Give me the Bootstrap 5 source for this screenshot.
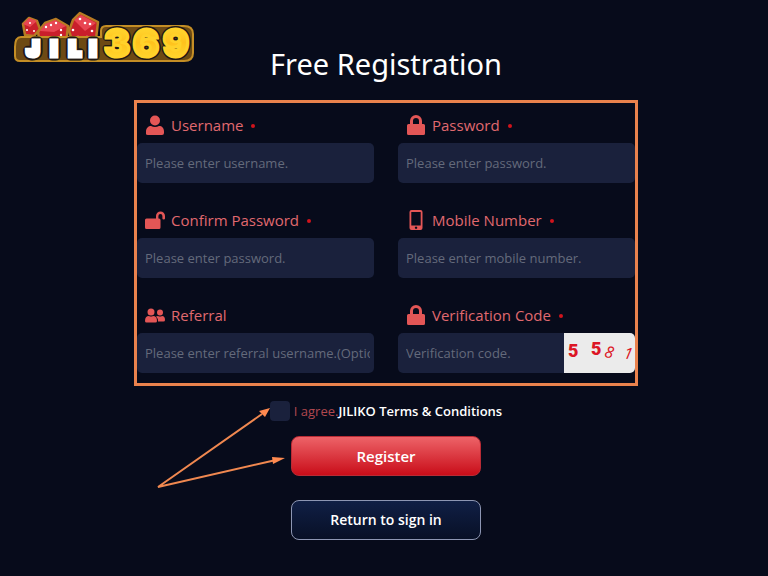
<!DOCTYPE html>
<html lang="en">
<head>
<meta charset="utf-8">
<meta name="viewport" content="width=device-width, initial-scale=1">
<title>Free Registration</title>
<link href="https://cdn.jsdelivr.net/npm/bootstrap@5.3.0/dist/css/bootstrap.min.css" rel="stylesheet">
<style>
body{background:#070b1b;color:#fff;font-family:"Open Sans","Noto Sans",sans-serif}
.brand{left:12px;top:8px}
.reg-main{max-width:508px;padding-top:44px}
.page-title{font-size:29px;line-height:40px;font-weight:400;font-family:"Noto Sans",sans-serif}
.frame{border:3px solid #ea824d}
.fields{column-gap:24px;row-gap:15px;display:grid;grid-template-columns:1fr 1fr;padding-bottom:10px}
.field-label{height:40px;color:#e0696f;font-size:15px;line-height:20px;padding:8px 8px 0}
.field-label svg{width:20px;height:20px;margin-right:6px;fill:#e35656;flex:none}
.req{width:4px;height:4px;background:#d0141c;margin:13px 0 0 8px}
.entry,.entry:focus{height:40px;background:#1a213c;border:0;border-radius:5px;color:#fff;font-size:13px;padding:0 4px 0 8px}
.entry::placeholder{color:#646a7b;opacity:1}
.code-img{width:71px;height:40px;background:#ebebeb;border-radius:0 5px 5px 0}
.agree{font-size:13px;line-height:20px;padding:15px 0}
.agree .form-check-input{width:20px;height:20px;background-color:#1a213c;border:0;border-radius:4px;margin:0 4px 0 0}
.agree label{color:#b0484f}
.agree a{font-weight:600}
.actions{width:190px}
.actions .btn{height:40px;font-size:15px;line-height:20px;border-radius:8px;font-weight:600}
.btn-reg{background:linear-gradient(#ed6368,#c90d19);border:1px solid #b82b35}
.actions .btn-back{background:linear-gradient(#101f45,#081026);border:1px solid #8d96b3;font-size:14px}
.arrows{left:0;top:0}
</style>
<script src="https://cdn.jsdelivr.net/npm/bootstrap@5.3.0/dist/js/bootstrap.bundle.min.js"></script>
</head>
<body>
<svg width="0" height="0" class="position-absolute" aria-hidden="true">
<symbol id="user" viewBox="0 0 20 20"><circle cx="10" cy="5.5" r="5"/><path d="M1 19v-2.500C1 13 3.500 11 6 11q4 2 8 0c3 0 5 2 5 5.500V18q0 2-2 2H3q-2 0-2-1Z"/></symbol>
<symbol id="lock" viewBox="0 0 20 20"><path fill-rule="evenodd" d="M4 9V6a6 6 0 0 1 12 0v3h1.500q1.500 0 1.500 1.500v8q0 1.500-1.500 1.500h-15Q1 20 1 18.500v-8Q1 9 2.500 9Zm3 0h6V6a3 3 0 0 0-6 0Z"/></symbol>
<symbol id="unlock" viewBox="0 0 20 20"><path d="M11 8.500V6a4.500 4.500 0 0 1 9 0v2.500q0 1-1.300 1t-1.300-1V6a2 2 0 0 0-4 0v2.500H14q1.500 0 1.500 1.500v7.500q0 1.500-1.500 1.500H1.500Q0 19 0 17.500V10q0-1.500 1.500-1.500Z"/></symbol>
<symbol id="phone" viewBox="0 0 20 20"><path fill-rule="evenodd" d="M5.500 0h9q2 0 2 2v16q0 2-2 2h-9q-2 0-2-2V2q0-2 2-2Zm-.2 2v13.500h9.400V2Zm4.700 14.500a1.200 1.200 0 1 0 .1 0Z"/></symbol>
<symbol id="users" viewBox="0 0 20 20"><circle cx="6" cy="7" r="3.500"/><circle cx="15" cy="7.500" r="3"/><path d="M0 16q0-5 4-5 2 1 4 0 4 0 4 5 0 1.500-1.500 1.500h-9Q0 17.500 0 16Zm13 .5q0-3.500-2-5 1-.5 2-.5 2 1 4 0 3 0 3 4 0 1.500-1.500 1.500Z"/></symbol>
</svg>

<svg class="brand position-absolute" width="188" height="60" viewBox="12 8 188 60" role="img" aria-label="JILI369">
<defs>
<linearGradient id="gold" x1="0" y1="0" x2="0" y2="1"><stop offset="0" stop-color="#ffe23b"/><stop offset=".5" stop-color="#ffc21c"/><stop offset="1" stop-color="#ffdf35"/></linearGradient>
<g id="small-letters" font-family="Inter,sans-serif" font-weight="900" font-size="20" text-anchor="middle"><text x="33" y="56">J</text><text x="54" y="56">I</text><text x="75" y="56">L</text><text x="93" y="56">I</text></g>
<g id="digits" font-family="Inter,sans-serif" font-weight="900" font-size="39" text-anchor="middle"><text x="117" y="57">3</text><text x="146" y="57">6</text><text x="176" y="57">9</text></g>
</defs>
<g stroke="#b77b23" stroke-width="2.500" fill="#c91f2b" stroke-linejoin="round">
<path d="M23 24 29 18 37 21 40 29 34 36 25 35Z"/><path d="M38 32 45 23 56 19 68 26 66 44H40Z"/><path d="M73 20 80 13 98 22 96 39 89 47 73 43 69 31Z"/>
</g>
<path d="M23 24 30 27 37 21 29 18Z" fill="#e84652"/><path d="M40 31 54 32 66 26 55 20 45 24Z" fill="#e84652"/><path d="M74 20 85 31 96 23 81 15Z" fill="#e84652"/>
<g fill="#fff"><circle cx="30" cy="23" r="1"/><circle cx="27" cy="30" r="1"/><circle cx="34" cy="31" r="1"/><circle cx="46" cy="27" r="1.200"/><circle cx="51" cy="25" r="1.200"/><circle cx="56" cy="23" r="1.200"/><circle cx="61" cy="30" r="1.200"/><circle cx="61" cy="35" r="1.200"/><circle cx="80" cy="19" r="1.300"/><circle cx="85" cy="23" r="1.300"/><circle cx="90" cy="24" r="1.300"/><circle cx="73" cy="30" r="1.300"/><circle cx="78" cy="37" r="1.300"/><circle cx="92" cy="31" r="1.300"/><circle cx="87" cy="37" r="1.300"/></g>
<path d="M21 37h80V31q0-5 5-5h78q9 0 9 8v19q0 8-9 8H20q-5 0-5-5v-9q0-10 6-10Z" fill="#6d4a14" stroke="#c48e25" stroke-width="2"/>
<g stroke-linejoin="round"><use href="#small-letters" fill="#201814" stroke="#201814" stroke-width="9"/><use href="#digits" fill="#201814" stroke="#201814" stroke-width="6"/></g>
<use href="#small-letters" fill="#fff" stroke="#fff" stroke-width="5"/><use href="#digits" fill="url(#gold)" stroke="#ffd22a" stroke-width="3"/>
</svg>

<main class="reg-main mx-auto ps-1">
<h1 class="page-title text-center mb-0 pb-3 box-content">Free Registration</h1>
<form>
<div class="frame">
<div class="fields">
<div><label for="un" class="field-label d-flex align-items-start"><svg aria-hidden="true" class="mt-1"><use href="#user"/></svg><span class="mt-1">Username</span><i class="req rounded-circle"></i></label><input id="un" class="form-control entry" placeholder="Please enter username."></div>
<div><label for="pw" class="field-label d-flex align-items-start"><svg aria-hidden="true" class="mt-1"><use href="#lock"/></svg><span class="mt-1">Password</span><i class="req rounded-circle"></i></label><input id="pw" type="password" class="form-control entry" placeholder="Please enter password."></div>
<div><label for="cp" class="field-label d-flex align-items-start"><svg aria-hidden="true" class="mt-1"><use href="#unlock"/></svg><span class="mt-1">Confirm Password</span><i class="req rounded-circle"></i></label><input id="cp" type="password" class="form-control entry" placeholder="Please enter password."></div>
<div><label for="mn" class="field-label d-flex align-items-start"><svg aria-hidden="true" class="mt-1"><use href="#phone"/></svg><span class="mt-1">Mobile Number</span><i class="req rounded-circle"></i></label><input id="mn" type="tel" class="form-control entry" placeholder="Please enter mobile number."></div>
<div><label for="rf" class="field-label d-flex align-items-start"><svg aria-hidden="true" class="mt-1"><use href="#users"/></svg><span class="mt-1">Referral</span></label><input id="rf" class="form-control entry" placeholder="Please enter referral username.(Optional)"></div>
<div><label for="vc" class="field-label d-flex align-items-start"><svg aria-hidden="true" class="mt-1"><use href="#lock"/></svg><span class="mt-1">Verification Code</span><i class="req rounded-circle"></i></label>
<div class="d-flex"><input id="vc" class="form-control entry rounded-end-0" placeholder="Verification code."><svg class="code-img flex-shrink-0" viewBox="0 0 71 40" fill="#dc1625" role="img" aria-label="5581"><g font-family="Roboto,sans-serif" font-weight="900" font-size="18"><text x="4" y="24">5</text><text x="27" y="22">5</text></g><g font-family="Open Sans,sans-serif" font-style="italic" font-size="16"><text x="41" y="25" transform="rotate(12 46 19)">8</text><text x="60" y="26" transform="rotate(10 64 20)">1</text></g></svg></div></div>
</div>
</div>
<div class="position-relative">
<svg class="arrows position-absolute" width="156" height="110" fill="none" stroke="#f08850" stroke-width="2" aria-hidden="true"><path d="M128 28 24 101 142 74"/><path d="M136 22 131 31 125 25ZM151 72 139 78 138 71Z" fill="#ff8a50" stroke="none"/></svg>
<div class="agree d-flex justify-content-center align-items-center"><input id="ag" type="checkbox" class="form-check-input"><label for="ag">I agree.</label><a href="#" class="text-white text-decoration-none">JILIKO Terms &amp; Conditions</a></div>
<div class="actions mx-auto d-grid gap-4">
<button type="submit" class="btn btn-reg text-white p-0">Register</button>
<button type="button" class="btn btn-back text-white p-0">Return to sign in</button>
</div>
</div>
</form>
</main>
</body>
</html>
